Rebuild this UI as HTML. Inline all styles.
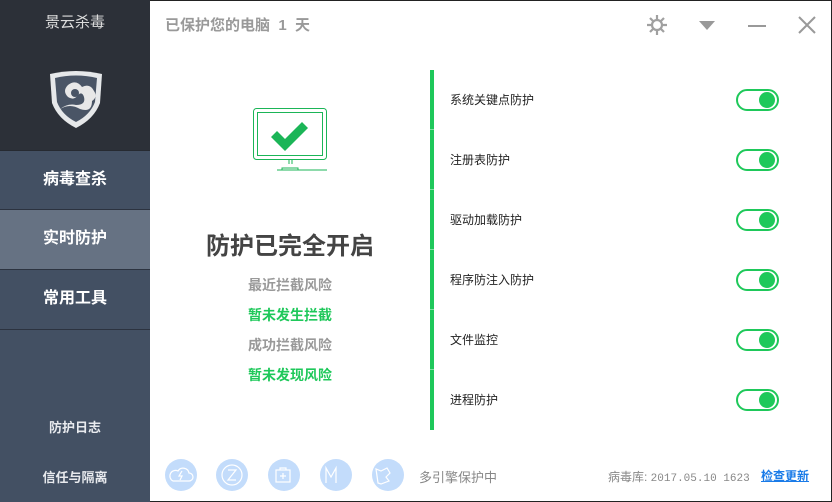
<!DOCTYPE html>
<html><head><meta charset="utf-8"><style>
*{margin:0;padding:0;box-sizing:border-box}
body{width:832px;height:502px;overflow:hidden;background:#fff;font-family:"Liberation Sans","Noto Sans CJK SC",sans-serif;position:relative}
.abs{position:absolute}
.side{left:0;top:0;width:150px;height:502px;background:#435063}
.top{left:0;top:0;width:150px;height:150px;background:#2c3038}
.menu{left:0;width:150px;height:60px;color:#fff;font-size:16px;font-weight:bold;text-align:center;line-height:58px;border-bottom:1px solid #2c3340}
.sm{left:0;width:150px;text-align:center;color:#e8eaee;font-size:13px;font-weight:bold}
.row{left:450px;font-size:12px;color:#222}
.tog{left:736px;width:43px;height:22px;border:2px solid #1ec85a;border-radius:11px}
.tog:after{content:"";position:absolute;right:2px;top:1px;width:16px;height:16px;border-radius:50%;background:#1ec85a}
.sep{left:430px;width:4px;height:1px;background:#7fe3a3}
.ic{top:459px;width:32px;height:32px;border-radius:50%;background:#c3dcfb}
</style></head><body>
<div class="abs side"></div>
<div class="abs top"></div>
<div class="abs" style="left:0;top:8px;width:150px;text-align:center;color:#ddd;font-size:15px;line-height:30px">景云杀毒</div>
<svg class="abs" style="left:48px;top:69px" width="56" height="60" viewBox="0 0 56 60">
<path d="M2 5 Q28 -1 54 5 L52 34 Q46 50 28 59 Q10 50 4 34 Z" fill="#e6e8ea"/>
<path d="M7 9 Q28 4 49 9 L47 33 Q42 46 28 53 Q14 46 9 33 Z" fill="#4a5566"/>
<path d="M12 40 Q22 34 32 40 Q44 44 44 32 Q50 28 46 22 Q42 14 34 18 Q28 10 20 16 Q14 22 20 28 Q26 32 30 26 Q34 22 36 28 Q38 36 28 36 Q20 34 12 40 Z" fill="#e8e8e8"/>
<circle cx="27" cy="24" r="4" fill="#4a5566"/>
</svg>
<div class="abs menu" style="top:150px;border-top:1px solid #262a31">病毒查杀</div>
<div class="abs menu" style="top:210px;background:#667283">实时防护</div>
<div class="abs menu" style="top:270px">常用工具</div>
<div class="abs sm" style="top:417px">防护日志</div>
<div class="abs sm" style="top:467px">信任与隔离</div>

<div class="abs" style="left:150px;top:0;width:682px;height:502px;border:1px solid #222;border-left:none"></div>
<div class="abs" style="left:165px;top:14px;font-size:15px;color:#999;font-weight:bold">已保护您的电脑 &nbsp;1 &nbsp;天</div>
<svg class="abs" style="left:646px;top:14px" width="22" height="22" viewBox="0 0 22 22"><g stroke="#a0a0a0" stroke-width="2.2" fill="none"><circle cx="11" cy="11" r="5"/><path d="M11 1v4M11 17v4M1 11h4M17 11h4M4 4l3 3M15 15l3 3M4 18l3-3M15 7l3-3"/></g></svg>
<svg class="abs" style="left:698px;top:20px" width="18" height="12"><path d="M1 1h16L9 10z" fill="#999"/></svg>
<div class="abs" style="left:748px;top:25px;width:18px;height:2px;background:#999"></div>
<svg class="abs" style="left:797px;top:15px" width="20" height="20"><path d="M2 2L18 18M18 2L2 18" stroke="#999" stroke-width="2"/></svg>

<svg class="abs" style="left:252px;top:107px" width="76" height="65" viewBox="0 0 76 65">
<g fill="none" stroke="#1bb557" stroke-width="1"><rect x="1.5" y="1.5" width="73" height="51" rx="3"/><rect x="5.5" y="5.5" width="65" height="43"/><path d="M25 63h50M30 63v-2h16v2M37 53v4M40 53v4"/></g>
<path d="M19 30l6-6 8 8 17-17 6 6-23 23z" fill="#1bb557"/>
</svg>
<div class="abs" style="left:200px;top:226px;width:180px;text-align:center;font-size:24px;font-weight:bold;color:#444">防护已完全开启</div>
<div class="abs" style="left:248px;top:275px;font-size:14px;color:#999;font-weight:bold">最近拦截风险</div>
<div class="abs" style="left:248px;top:305px;font-size:14px;color:#1ec85a;font-weight:bold">暂未发生拦截</div>
<div class="abs" style="left:248px;top:335px;font-size:14px;color:#999;font-weight:bold">成功拦截风险</div>
<div class="abs" style="left:248px;top:365px;font-size:14px;color:#1ec85a;font-weight:bold">暂未发现风险</div>

<div class="abs" style="left:430px;top:70px;width:4px;height:360px;background:#1ec85a"></div>
<div class="abs sep" style="top:129px"></div><div class="abs sep" style="top:189px"></div><div class="abs sep" style="top:249px"></div><div class="abs sep" style="top:309px"></div><div class="abs sep" style="top:369px"></div>
<div class="abs row" style="top:91px">系统关键点防护</div><div class="abs tog" style="top:89px"></div>
<div class="abs row" style="top:151px">注册表防护</div><div class="abs tog" style="top:149px"></div>
<div class="abs row" style="top:211px">驱动加载防护</div><div class="abs tog" style="top:209px"></div>
<div class="abs row" style="top:271px">程序防注入防护</div><div class="abs tog" style="top:269px"></div>
<div class="abs row" style="top:331px">文件监控</div><div class="abs tog" style="top:329px"></div>
<div class="abs row" style="top:391px">进程防护</div><div class="abs tog" style="top:389px"></div>

<div class="abs ic" style="left:165px"></div>
<div class="abs ic" style="left:216px"></div>
<div class="abs ic" style="left:268px"></div>
<div class="abs ic" style="left:320px"></div>
<div class="abs ic" style="left:372px"></div>
<svg class="abs" style="left:165px;top:459px" width="240" height="32" fill="none" stroke="#fff" stroke-width="1.2">
<path d="M8 22h16a4 4 0 0 0 0-8 6 6 0 0 0-11-2 4 4 0 0 0-5 10z"/><path d="M17 12l-3 5h3l-2 4" />
<circle cx="67" cy="16" r="10"/><path d="M63 11h8l-8 10h8"/>
<rect x="111" y="11" width="14" height="12"/><path d="M115 11v-2h6v2M118 14v6M115 17h6"/>
<path d="M161 24V9l5 9 5-9v15"/>
<path d="M213 24l-2-14 5 2 6-3 3 5-4 4 3 4-8 3z"/>
</svg>
<div class="abs" style="left:419px;top:467px;font-size:13px;color:#888">多引擎保护中</div>
<div class="abs" style="left:608px;top:468px;font-size:12px;color:#888">病毒库: <span style="font-family:'Liberation Mono',monospace;font-size:11px">2017.05.10 1623</span></div>
<div class="abs" style="left:761px;top:467px;font-size:12px;color:#1a7be8;font-weight:bold;text-decoration:underline">检查更新</div>
</body></html>
